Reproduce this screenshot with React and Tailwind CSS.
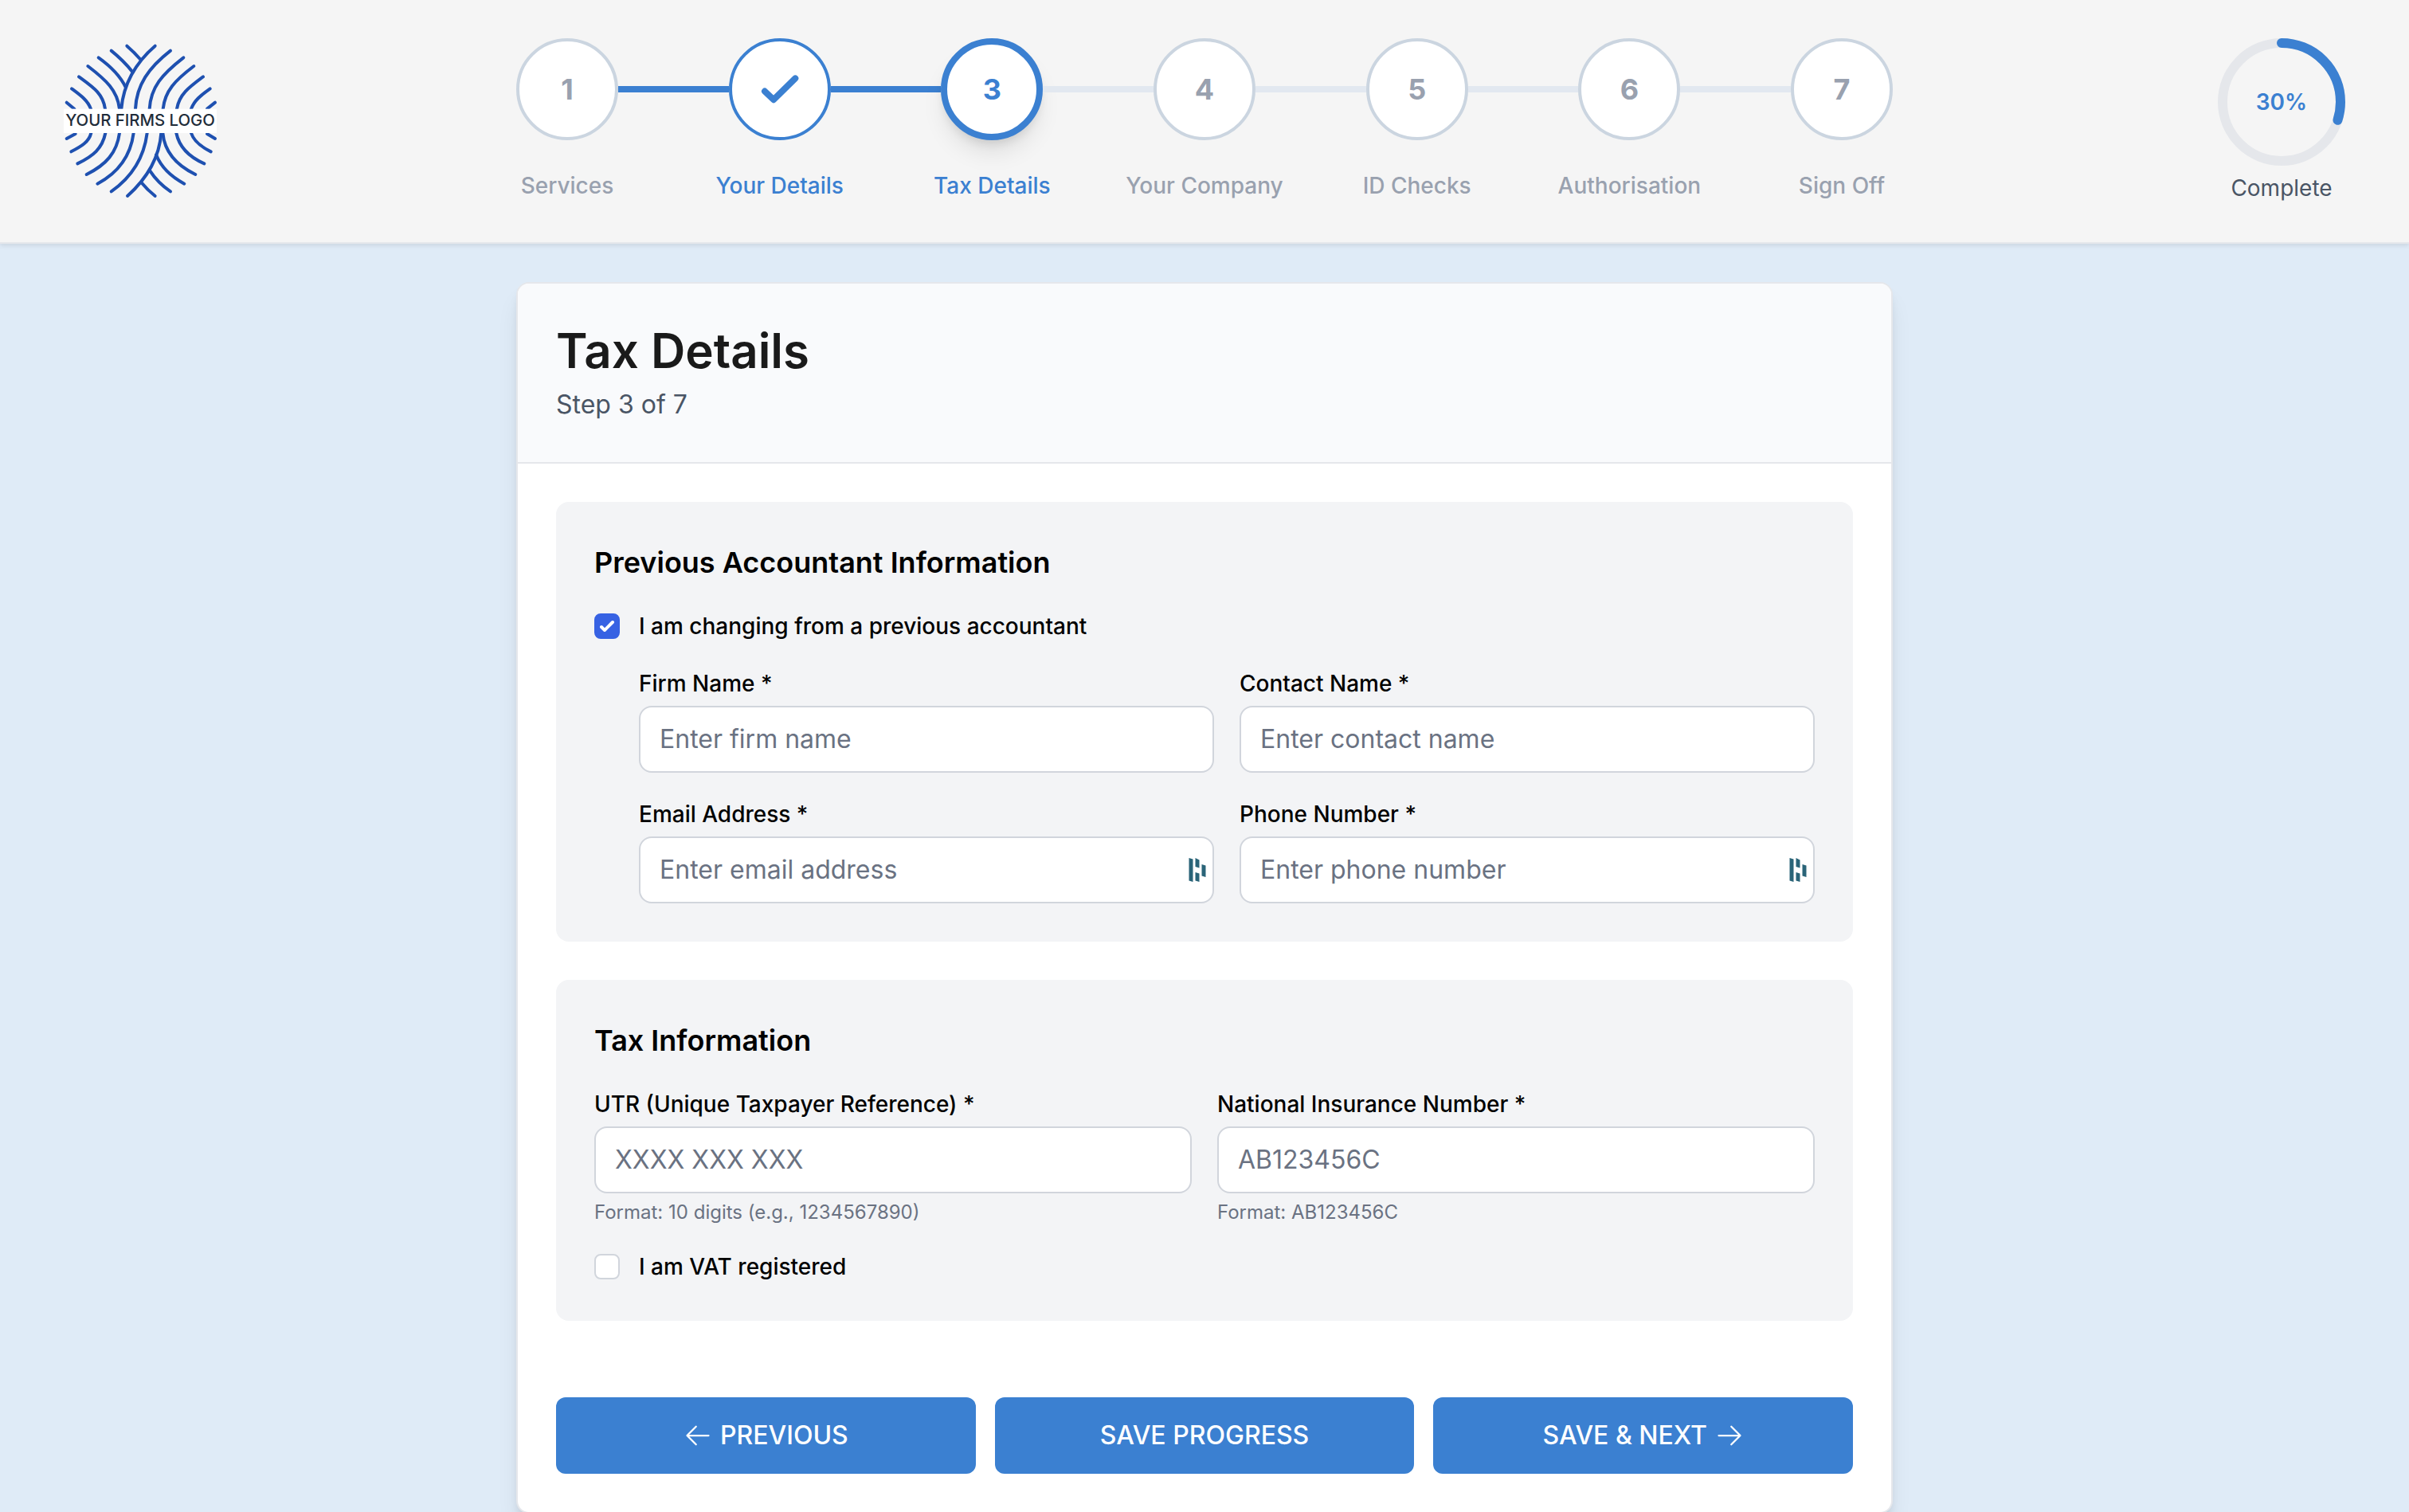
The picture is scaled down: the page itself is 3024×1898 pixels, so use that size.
import { useState } from "react";
import clsx from "clsx";

const steps = [
  { id: 1, label: "Services" },
  { id: 2, label: "Your Details" },
  { id: 3, label: "Tax Details" },
  { id: 4, label: "Your Company" },
  { id: 5, label: "ID Checks" },
  { id: 6, label: "Authorisation" },
  { id: 7, label: "Sign Off" },
];

const CURRENT_STEP = 3;
const PROGRESS = 30;

const logoStrands = [
  // upper half
  "M298 53Q325 76 350 105",
  "M239 71Q285 108 320 152",
  "M191 97Q265 150 293 208",
  "M151 129C220 182 262 220 270 290",
  "M117 169C170 208 208 232 216 290",
  "M90 214C125 240 150 258 162 290",
  "M71 266L100 290",
  "M404 53C330 116 284 200 277 290",
  "M462 71C380 135 334 200 330 290",
  "M511 97C430 160 388 208 383 290",
  "M550 129C480 182 441 222 434 290",
  "M585 169C530 210 495 236 486 290",
  "M611 214C575 240 552 258 540 290",
  "M630 266L600 290",
  // lower half
  "M71 402L104 384",
  "M88 451C125 432 155 415 163 381",
  "M112 496C170 468 205 440 217 381",
  "M146 537C220 500 260 455 270 381",
  "M187 572C270 528 312 465 323 381",
  "M239 601C315 548 362 475 374 381",
  "M300 618C370 555 420 475 427 381",
  "M404 618Q376 596 352 567",
  "M462 601Q415 570 383 521",
  "M514 572Q435 530 408 463",
  "M556 537C490 505 440 455 433 381",
  "M589 496C530 470 495 435 484 381",
  "M614 451C575 432 550 412 540 381",
  "M630 402L600 384",
];

function Logo() {
  return (
    <svg viewBox="60 48 576 576" className="w-48 h-48 overflow-visible" role="img" aria-label="Your firms logo">
      <g fill="none" stroke="#1e50b0" strokeWidth="12" strokeLinecap="round">
        {logoStrands.map((d) => (
          <path key={d} d={d} />
        ))}
      </g>
      <rect x="60" y="290" width="576" height="91" fill="#fff" />
      <text
        x="348"
        y="355"
        textAnchor="middle"
        fontSize="61"
        fill="#1f2d3a"
        className="font-['Inter',sans-serif] font-medium"
      >
        YOUR FIRMS LOGO
      </text>
    </svg>
  );
}

function StepCircle({ step }) {
  const done = step.id === CURRENT_STEP - 1;
  const current = step.id === CURRENT_STEP;
  return (
    <li className="flex w-32 shrink-0 flex-col items-center">
      <div
        className={clsx(
          "flex h-32 w-32 items-center justify-center rounded-full bg-white text-4xl font-bold",
          current && "border-8 border-[#3b80d1] text-[#3b80d1] shadow-[0_20px_30px_-6px_rgba(0,0,0,0.1),0_8px_12px_-4px_rgba(0,0,0,0.1)]",
          done && "border-4 border-[#3b80d1] text-[#3b80d1]",
          !current && !done && "border-4 border-[#cbd5e0] text-gray-400"
        )}
      >
        {done ? (
          <svg viewBox="0 0 64 64" className="h-16 w-16" fill="none" stroke="currentColor" strokeWidth="8" strokeLinecap="round" strokeLinejoin="round" aria-hidden="true">
            <path d="M13 34.6L24.1 45.2L51.3 18.4" />
          </svg>
        ) : (
          step.id
        )}
      </div>
      <span
        className={clsx(
          "mt-[37px] whitespace-nowrap text-[28px] leading-10 font-medium",
          current || done ? "text-[#3b80d1]" : "text-gray-400"
        )}
      >
        {step.label}
      </span>
    </li>
  );
}

function Stepper() {
  return (
    <ol className="flex items-start">
      {steps.map((step, i) => [
        i > 0 && (
          <li
            key={`line-${step.id}`}
            aria-hidden="true"
            className={clsx("mt-15 h-2 flex-1", step.id <= CURRENT_STEP ? "bg-[#3b80d1]" : "bg-[#e2e8f0]")}
          />
        ),
        <StepCircle key={step.id} step={step} />,
      ])}
    </ol>
  );
}

function ProgressRing({ value }) {
  return (
    <div className="flex flex-col items-center gap-2">
      <div className="grid h-40 w-40 place-items-center">
        <svg viewBox="0 0 160 160" className="col-start-1 row-start-1 h-40 w-40 -rotate-90" fill="none" strokeWidth="12" aria-hidden="true">
          <circle cx="80" cy="80" r="74" stroke="#e5e7eb" />
          <circle
            cx="80"
            cy="80"
            r="74"
            stroke="#3b80d1"
            strokeLinecap="round"
            pathLength="100"
            strokeDasharray={`${value} 100`}
          />
        </svg>
        <span className="col-start-1 row-start-1 text-[28px] leading-10 font-semibold text-[#3b80d1]">{value}%</span>
      </div>
      <span className="text-[28px] leading-10 text-gray-600">Complete</span>
    </div>
  );
}

// autofill badge shown at the right end of a field
function AutofillBadge() {
  return (
    <svg viewBox="0 0 22 30" className="pointer-events-none absolute top-[27px] right-2.5 h-[30px] w-[22px]" fill="#2a6478" aria-hidden="true">
      <path d="M0.5 0L5.5 1.5V30L0.5 28.5ZM8.5 0L13.5 2.5V12.5L8.5 11ZM8.5 18L13.5 19.5V30L8.5 28.5ZM16.5 8L21.5 9.5V24L16.5 22.5Z" />
    </svg>
  );
}

function Field({ id, label, type = "text", placeholder, hint, badge }) {
  return (
    <div>
      <label htmlFor={id} className="mb-2 block text-[28px] leading-10 font-medium text-black">
        {label} *
      </label>
      <div className="relative">
        <input
          id={id}
          type={type}
          placeholder={placeholder}
          className="block h-21 w-full rounded-2xl border-2 border-gray-300 bg-white px-6 pb-0.5 text-[32px] placeholder:text-gray-500 outline-none focus:border-[#3b80d1]"
        />
        {badge && <AutofillBadge />}
      </div>
      {hint && <p className="mt-2 text-2xl text-gray-500">{hint}</p>}
    </div>
  );
}

function Checkbox({ id, label, checked, onChange }) {
  return (
    <div className="flex items-center gap-6">
      <span className="grid h-8 w-8">
        <input
          id={id}
          type="checkbox"
          checked={checked}
          onChange={(e) => onChange(e.target.checked)}
          className="col-start-1 row-start-1 h-8 w-8 appearance-none rounded-lg border-2 border-gray-300 bg-white checked:border-[#3762e3] checked:bg-[#3762e3]"
        />
        {checked && (
          <svg viewBox="0 0 16 16" className="pointer-events-none col-start-1 row-start-1 h-8 w-8" fill="#fff" aria-hidden="true">
            <path d="M12.207 4.793a1 1 0 010 1.414l-5 5a1 1 0 01-1.414 0l-2-2a1 1 0 011.414-1.414L6.5 9.086l4.293-4.293a1 1 0 011.414 0z" />
          </svg>
        )}
      </span>
      <label htmlFor={id} className="text-[28px] leading-10 font-medium text-black">
        {label}
      </label>
    </div>
  );
}

function Panel({ title, children }) {
  return (
    <section className="flex flex-col gap-8 rounded-2xl bg-gray-100 p-12">
      <h2 className="text-4xl leading-14 font-semibold text-black">{title}</h2>
      {children}
    </section>
  );
}

function Arrow({ d }) {
  return (
    <svg viewBox="0 0 24 24" className="h-9 w-9" fill="none" stroke="currentColor" strokeWidth="1.5" strokeLinecap="round" strokeLinejoin="round" aria-hidden="true">
      <path d={d} />
    </svg>
  );
}

function ActionButton({ children }) {
  return (
    <button
      type="button"
      className="flex h-24 flex-1 items-center justify-center gap-2.5 rounded-xl bg-[#3b80d1] text-[32px] font-medium text-white uppercase hover:bg-[#3272bd]"
    >
      {children}
    </button>
  );
}

export default function App() {
  const [hasPrevious, setHasPrevious] = useState(true);
  const [vatRegistered, setVatRegistered] = useState(false);

  return (
    <div className="min-h-screen bg-[#dfebf7] font-['Inter',sans-serif]">
      {/* --- HEADER --- */}
      <header className="grid grid-cols-[1fr_minmax(0,1728px)_1fr] border-b-2 border-gray-200 bg-[#f5f5f5] px-20 py-12 shadow-[0_2px_6px_rgba(0,0,0,0.1)]">
        <div className="self-center">
          <Logo />
        </div>
        <Stepper />
        <div className="justify-self-end">
          <ProgressRing value={PROGRESS} />
        </div>
      </header>

      {/* --- FORM CARD --- */}
      <main className="px-12 py-12">
        <form className="mx-auto max-w-[1728px] overflow-hidden rounded-2xl border-2 border-gray-200 bg-white shadow-[0_20px_30px_-6px_rgba(0,0,0,0.1),0_8px_12px_-4px_rgba(0,0,0,0.1)]">
          <div className="border-b-2 border-gray-200 bg-[#f9fafc] p-12">
            <h1 className="text-6xl leading-18 font-semibold text-[#1a1a1a]">Tax Details</h1>
            <p className="mt-2 text-[32px] leading-12 text-gray-600">Step {CURRENT_STEP} of {steps.length}</p>
          </div>

          <div className="flex flex-col gap-12 p-12">
            <Panel title="Previous Accountant Information">
              <Checkbox
                id="previous-accountant"
                label="I am changing from a previous accountant"
                checked={hasPrevious}
                onChange={setHasPrevious}
              />
              {hasPrevious && (
                <div className="grid grid-cols-2 gap-8 pl-14">
                  <Field id="firm-name" label="Firm Name" placeholder="Enter firm name" />
                  <Field id="contact-name" label="Contact Name" placeholder="Enter contact name" />
                  <Field id="email" type="email" label="Email Address" placeholder="Enter email address" badge />
                  <Field id="phone" type="tel" label="Phone Number" placeholder="Enter phone number" badge />
                </div>
              )}
            </Panel>

            <Panel title="Tax Information">
              <div className="grid grid-cols-2 gap-8">
                <Field
                  id="utr"
                  label="UTR (Unique Taxpayer Reference)"
                  placeholder="XXXX XXX XXX"
                  hint="Format: 10 digits (e.g., 1234567890)"
                />
                <Field id="nino" label="National Insurance Number" placeholder="AB123456C" hint="Format: AB123456C" />
              </div>
              <Checkbox id="vat" label="I am VAT registered" checked={vatRegistered} onChange={setVatRegistered} />
            </Panel>

            <div className="flex gap-6 pt-12">
              <ActionButton>
                <Arrow d="M10.5 19.5 3 12m0 0 7.5-7.5M3 12h18" />
                Previous
              </ActionButton>
              <ActionButton>Save Progress</ActionButton>
              <ActionButton>
                Save &amp; Next
                <Arrow d="M13.5 4.5 21 12m0 0-7.5 7.5M21 12H3" />
              </ActionButton>
            </div>
          </div>
        </form>
      </main>
    </div>
  );
}
